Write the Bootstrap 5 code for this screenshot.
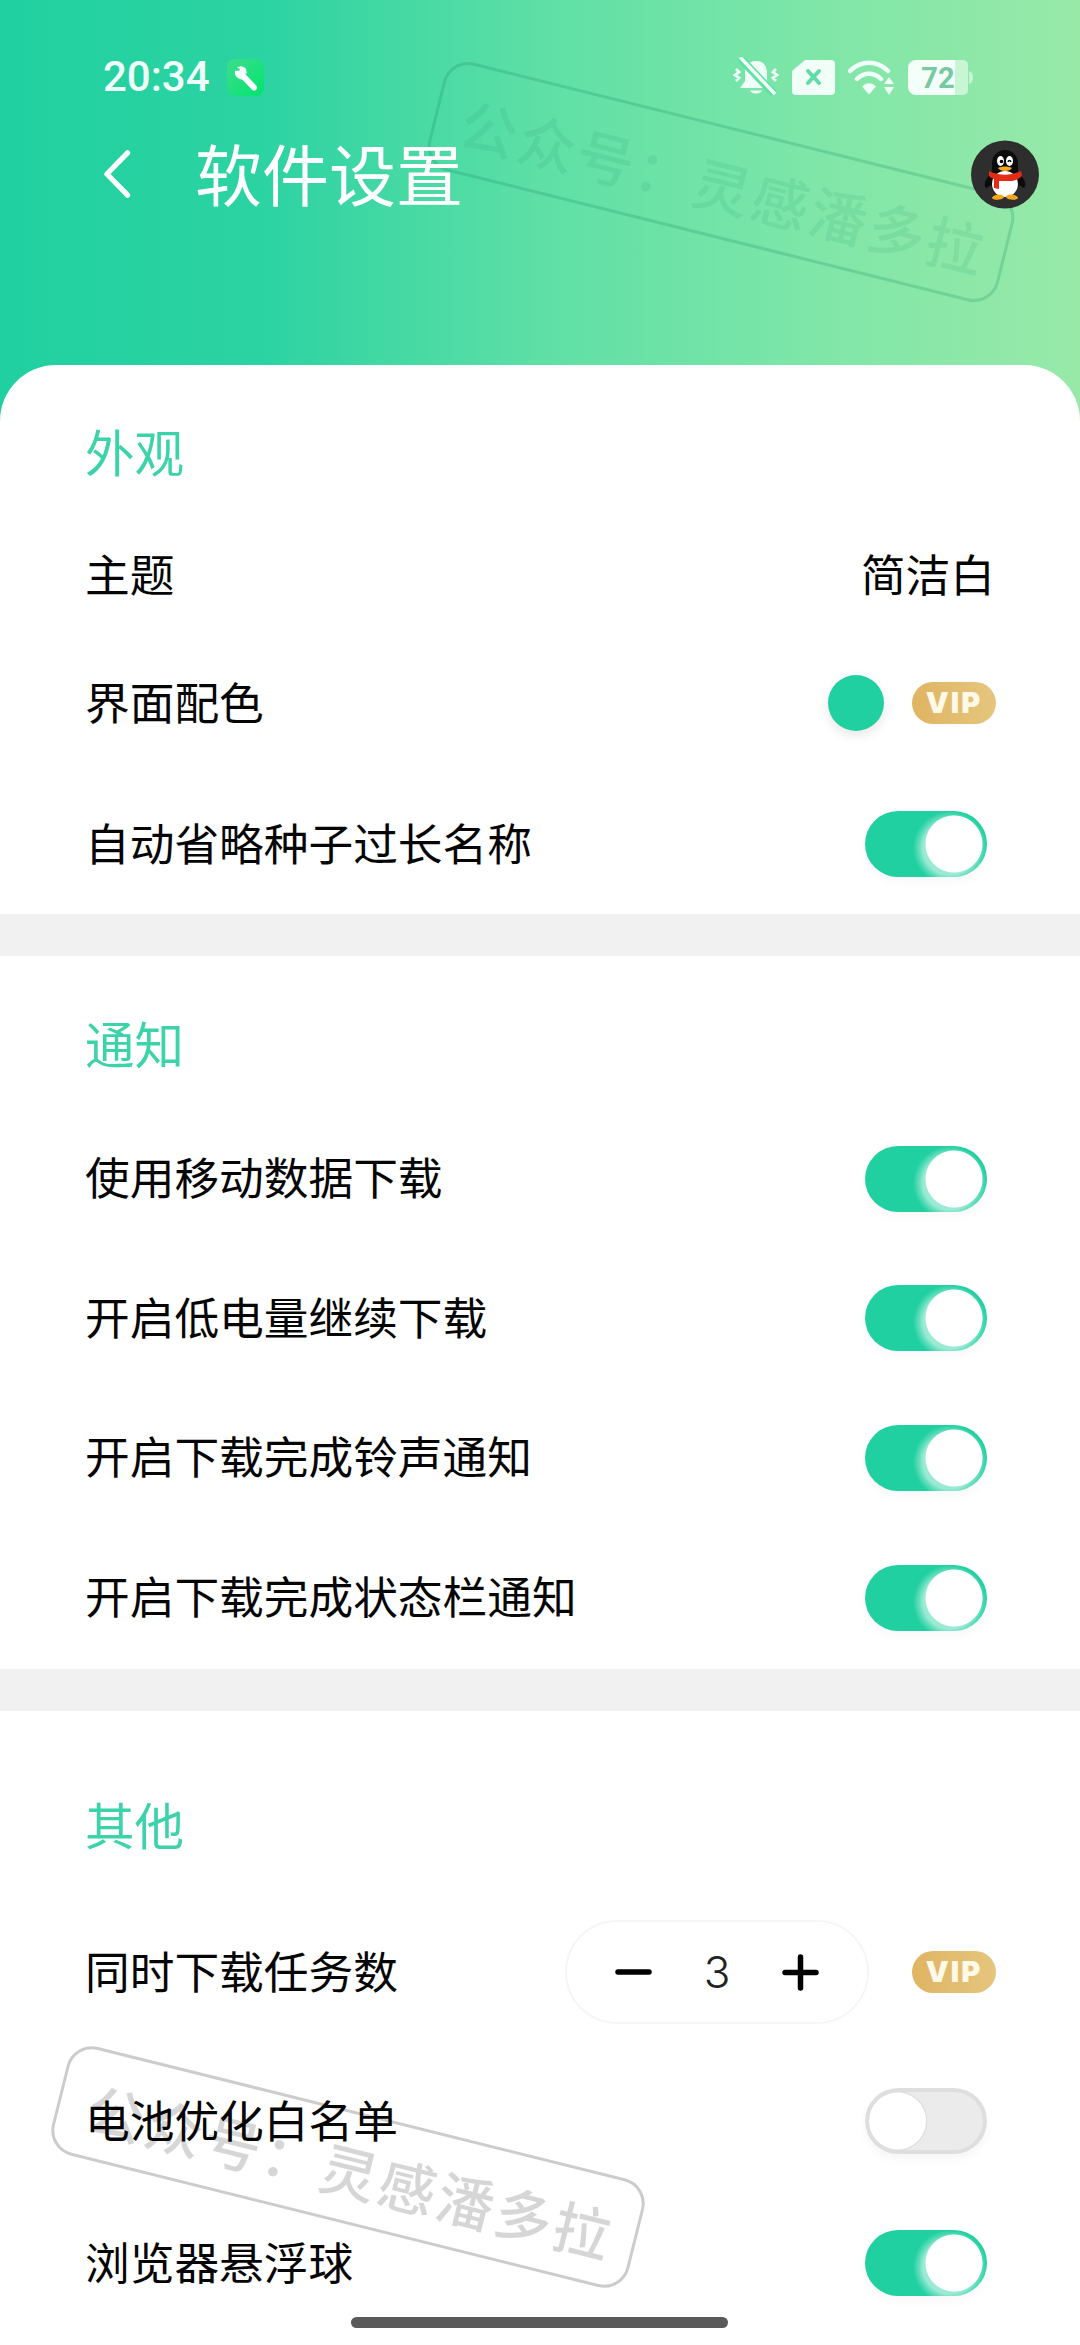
<!doctype html>
<html lang="zh-CN">
<head>
<meta charset="utf-8">
<title>软件设置</title>
<link href="https://cdn.jsdelivr.net/npm/bootstrap@5.3.0/dist/css/bootstrap.min.css" rel="stylesheet">
<style>
html,body{width:1080px;height:2345px;overflow:hidden;background:#fff}
body{font-family:"Noto Sans CJK SC","Noto Sans",sans-serif;color:#050505;position:relative}
.hero{height:425px;background:linear-gradient(90deg,#20d0a0 0%,#2dd3a2 25%,#5edfa6 50%,#7ee6a8 75%,#98e9a8 100%);padding-top:57px;position:relative}
.sbar{height:40px;padding:0 107px 0 103px}
.clock{font-family:Roboto,sans-serif;font-weight:500;font-size:42px;line-height:40px;color:#effff8;margin-right:17px}
.sicons{gap:13px}
.sicons svg{display:block}
.topbar{height:100px;margin-top:27px;padding:0 41px 0 103px;position:relative;z-index:2}
.backwrap{width:92px}
.pagetitle{font-size:67px;font-weight:400;line-height:80px;color:#fff;margin:0 0 5px}
.stamp{position:absolute;height:112px;border-radius:26px;display:flex;align-items:center;justify-content:center;font-size:57px;font-weight:500;letter-spacing:3px;white-space:nowrap;padding:6px 0 0 8px;transform:translate(-50%,-50%) rotate(14deg);pointer-events:none}
.stamp-a{width:588px;left:721px;top:182px;border:3px solid rgba(20,130,90,.22);color:rgba(30,150,105,.12)}
.stamp-b{width:595px;left:348px;top:2167px;border:3px solid rgba(0,0,0,.2);color:rgba(0,0,0,.16);z-index:5}
.sheet{margin-top:-60px;background:#fff;border-radius:56px 56px 0 0;position:relative;z-index:1}
.sect-a{height:549px;padding:45px 85px 0}
.sect-b{height:713px;padding:46px 85px 0}
.sect-c{padding:72px 85px 0}
.divband{height:42px;background:#f1f1f1}
.sect-title{font-size:49.500px;line-height:81px;height:90px;color:#3dd3aa;margin:0;font-weight:400}
.item{height:140px;font-size:44.700px;line-height:60px}
.item>span:not(.d-flex){margin-bottom:5px}
.h-soft{height:139.6px}
.mt-a{margin-top:5px}
.h-b{height:116px}
.mt-c{margin-top:13px}
.mt-d{margin-top:17px}
.mt-e{margin-top:29px}
.mt-f{margin-top:9px}
.mt-g{margin-top:2px}
.swatch{width:56px;height:56px;border-radius:50%;background:#20d0a0;box-shadow:0 4px 12px rgba(0,0,0,.1);margin-right:28px}
.viptag{width:84px;height:42px;border-radius:21px;background:linear-gradient(90deg,#e0b462,#e5c67e);color:#fff9e8;font-family:Inter,sans-serif;font-weight:900;font-size:29px;line-height:42px;text-align:center;letter-spacing:2px;margin-right:-1px}
.form-switch.tglbox{padding:0;margin:0 8px 0 0;min-height:0;display:flex}
.form-switch .form-check-input.tgl,.form-switch .form-check-input.tgl:focus{width:122px;height:66px;margin:0;float:none;border:0;border-radius:33px;box-shadow:inset 0 0 0 4px #dedede,0 5px 10px rgba(0,0,0,.04);background-color:#ebebeb;background-position:0 0;background-size:100% 100%;background-image:radial-gradient(circle at 32.5px 33px,#fff 28px,#dedede 29px,#dedede 29.5px,transparent 30px),none}
.form-switch .form-check-input.tgl:checked,.form-switch .form-check-input.tgl:checked:focus{background-color:#20d0a0;box-shadow:0 5px 10px rgba(0,0,0,.03);background-position:0 0;background-image:radial-gradient(circle at 89px 33px,#fff 28px,rgba(255,255,255,0) 29px),radial-gradient(circle at 85px 37px,rgba(255,255,255,.55) 27px,rgba(255,255,255,.3) 31px,rgba(255,255,255,0) 37px)}
.stepper{width:304px;height:104px;border:2px solid #f6f6f6;border-radius:52px;margin-right:43px;padding:0 48px;background:#fff}
.stepval{font-family:Inter,sans-serif;font-weight:300;font-size:44px;line-height:50px;color:#222}
.homebar{position:absolute;left:351px;top:2317px;width:377px;height:11px;border-radius:6px;background:#5a5a5a;z-index:6}
</style>
</head>
<body>
<div class="hero">
  <div class="stamp stamp-a">公众号：灵感潘多拉</div>
  <div class="sbar d-flex justify-content-between align-items-center">
    <div class="d-flex align-items-center">
      <span class="clock">20:34</span>
      <svg width="37" height="37" viewBox="0 0 37 37"><defs><linearGradient id="wg" x1="0" y1="0" x2="1" y2="1"><stop offset="0" stop-color="#3fdc8e"/><stop offset="1" stop-color="#00e56f"/></linearGradient></defs><rect width="37" height="37" rx="8" fill="url(#wg)"/><path d="M27 28.5 16.5 17.5" stroke="#fff" stroke-width="6" stroke-linecap="round" fill="none"/><path d="M8 11.5a7.5 7.5 0 0 0 11 8l-1-9-4.500-3.500-1 4.500-3.500 .5z" fill="#fff"/><path d="M10 8.500a7 7 0 0 1 9 1.500l1 5-4-3.500z" fill="#fff"/></svg>
    </div>
    <div class="sicons d-flex align-items-center">
      <svg width="46" height="40" viewBox="0 0 46 40" fill="none"><path d="M23 4c-7.500 0-11 5-11 12v8l-5 7h32l-5-7v-8c0-7-3.500-12-11-12z" fill="#f0fff8"/><path d="M17 33.500h12c-1 4-11 4-12 0z" fill="#f0fff8"/><path d="M7 1l34 36" stroke="#62e0a6" stroke-width="8"/><path d="M7 0l35 37" stroke="#f0fff8" stroke-width="3.500"/><path d="M3 12l3 3-4 3 4 3-3 3M43 12l-3 3 4 3-4 3 3 3" stroke="#f0fff8" stroke-width="2.800"/></svg>
      <svg width="43" height="35" viewBox="0 0 43 35"><path d="M13 0h26a4 4 0 0 1 4 4v27a4 4 0 0 1-4 4H4a4 4 0 0 1-4-4V11z" fill="#f2fff9"/><path d="M16 11l11 12M27 11 16 23" stroke="#5fdca8" stroke-width="4" stroke-linecap="round"/></svg>
      <svg width="47" height="37" viewBox="0 0 47 37" fill="none"><path d="M2 12c11-11 27-11 38 0M9 20c7-7 17-7 24 0" stroke="#f0fff8" stroke-width="4.500" stroke-linecap="round"/><path d="M14 27.500c4-4.500 10-4.500 14 0l-7 8z" fill="#f0fff8"/><path d="M41 18l5 7H36zM41 36l5-8H36z" fill="#f0fff8"/></svg>
      <svg width="65" height="35" viewBox="0 0 65 35"><path d="M47 0h8a5 5 0 0 1 5 5v25a5 5 0 0 1-5 5h-8z" fill="#c8f5d4"/><path d="M61 11c3 1 4 3 4 6.500s-1 5.500-4 6.500z" fill="#c8f5d4"/><path d="M8 0h39v35H8a8 8 0 0 1-8-8V8a8 8 0 0 1 8-8z" fill="#f4fff9"/><text x="30" y="28" text-anchor="middle" font-family="Roboto,sans-serif" font-weight="700" font-size="29" fill="#76c9a0">72</text></svg>
    </div>
  </div>
  <div class="topbar d-flex align-items-center justify-content-between">
    <div class="d-flex align-items-center">
      <div class="backwrap"><svg class="d-block" width="28" height="48" viewBox="0 0 28 50" fill="none"><path d="M25 3 3.500 25 25 47" stroke="#fff" stroke-width="5.500" stroke-linecap="round" stroke-linejoin="round"/></svg></div>
      <h1 class="pagetitle">软件设置</h1>
    </div>
    <svg width="68" height="69" viewBox="0 0 68 69"><circle cx="34" cy="34.500" r="34" fill="#2e2e2e"/><path d="M14 42c2-5 5-7 7-10v-8c0-9 6-14 13-14s13 5 13 14v8c2 3 5 5 7 10 1 5-1 7-3 5l-3-2c-2 8-7 11-14 11s-12-3-14-11l-3 2c-2 2-4 0-3-5z" fill="#0b0b0b"/><ellipse cx="34" cy="44" rx="13" ry="13" fill="#fff"/><ellipse cx="29.500" cy="21" rx="3.500" ry="5" fill="#fff"/><ellipse cx="38.500" cy="21" rx="3.500" ry="5" fill="#fff"/><circle cx="30.500" cy="21.500" r="1.800" fill="#000"/><path d="M37 22c.6-2 2.400-2 3 0" stroke="#000" stroke-width="1.500" fill="none"/><path d="M18 31c10 5 22 5 32 0l1 5c-3 3-6 4-10 5H28v8l-5-1v-9c-3-1-4-2-5-3z" fill="#e32b16"/><path d="M27 28c4-2 10-2 14 0-2 4-12 4-14 0z" fill="#f5a81c"/><path d="M21 58c1-4 11-5 12-1-1 3-11 4-12 1zM35 57c1-4 11-3 12 1-1 3-11 2-12-1z" fill="#f5a81c"/></svg>
  </div>
</div>

<main class="sheet">
  <section class="sect-a">
    <h2 class="sect-title">外观</h2>
    <div class="item mt-a d-flex justify-content-between align-items-center"><span>主题</span><span>简洁白</span></div>
    <div class="item h-b d-flex justify-content-between align-items-center"><span>界面配色</span><span class="d-flex align-items-center"><span class="swatch"></span><span class="viptag">VIP</span></span></div>
    <div class="item mt-c d-flex justify-content-between align-items-center"><span>自动省略种子过长名称</span><div class="form-check form-switch tglbox"><input class="form-check-input tgl" type="checkbox" checked aria-label="自动省略种子过长名称"></div></div>
  </section>
  <div class="divband"></div>
  <section class="sect-b">
    <h2 class="sect-title">通知</h2>
    <div class="item mt-d h-soft d-flex justify-content-between align-items-center"><span>使用移动数据下载</span><div class="form-check form-switch tglbox"><input class="form-check-input tgl" type="checkbox" checked aria-label="使用移动数据下载"></div></div>
    <div class="item h-soft d-flex justify-content-between align-items-center"><span>开启低电量继续下载</span><div class="form-check form-switch tglbox"><input class="form-check-input tgl" type="checkbox" checked aria-label="开启低电量继续下载"></div></div>
    <div class="item h-soft d-flex justify-content-between align-items-center"><span>开启下载完成铃声通知</span><div class="form-check form-switch tglbox"><input class="form-check-input tgl" type="checkbox" checked aria-label="开启下载完成铃声通知"></div></div>
    <div class="item h-soft d-flex justify-content-between align-items-center"><span>开启下载完成状态栏通知</span><div class="form-check form-switch tglbox"><input class="form-check-input tgl" type="checkbox" checked aria-label="开启下载完成状态栏通知"></div></div>
  </section>
  <div class="divband"></div>
  <section class="sect-c">
    <h2 class="sect-title">其他</h2>
    <div class="item mt-e d-flex justify-content-between align-items-center"><span>同时下载任务数</span><span class="d-flex align-items-center">
      <span class="stepper d-flex justify-content-between align-items-center">
        <svg width="37" height="6" viewBox="0 0 37 6"><path d="M3 3h31" stroke="#000" stroke-width="5.500" stroke-linecap="round"/></svg>
        <span class="stepval">3</span>
        <svg width="37" height="37" viewBox="0 0 37 37"><path d="M3 18.500h31M18.500 3v31" stroke="#000" stroke-width="5.500" stroke-linecap="round"/></svg>
      </span><span class="viptag">VIP</span></span></div>
    <div class="item mt-f d-flex justify-content-between align-items-center"><span>电池优化白名单</span><div class="form-check form-switch tglbox"><input class="form-check-input tgl" type="checkbox" aria-label="电池优化白名单"></div></div>
    <div class="item mt-g d-flex justify-content-between align-items-center"><span>浏览器悬浮球</span><div class="form-check form-switch tglbox"><input class="form-check-input tgl" type="checkbox" checked aria-label="浏览器悬浮球"></div></div>
  </section>
</main>
<div class="stamp stamp-b">公众号：灵感潘多拉</div>
<div class="homebar"></div>
<script src="https://cdn.jsdelivr.net/npm/bootstrap@5.3.0/dist/js/bootstrap.bundle.min.js"></script>
</body>
</html>
